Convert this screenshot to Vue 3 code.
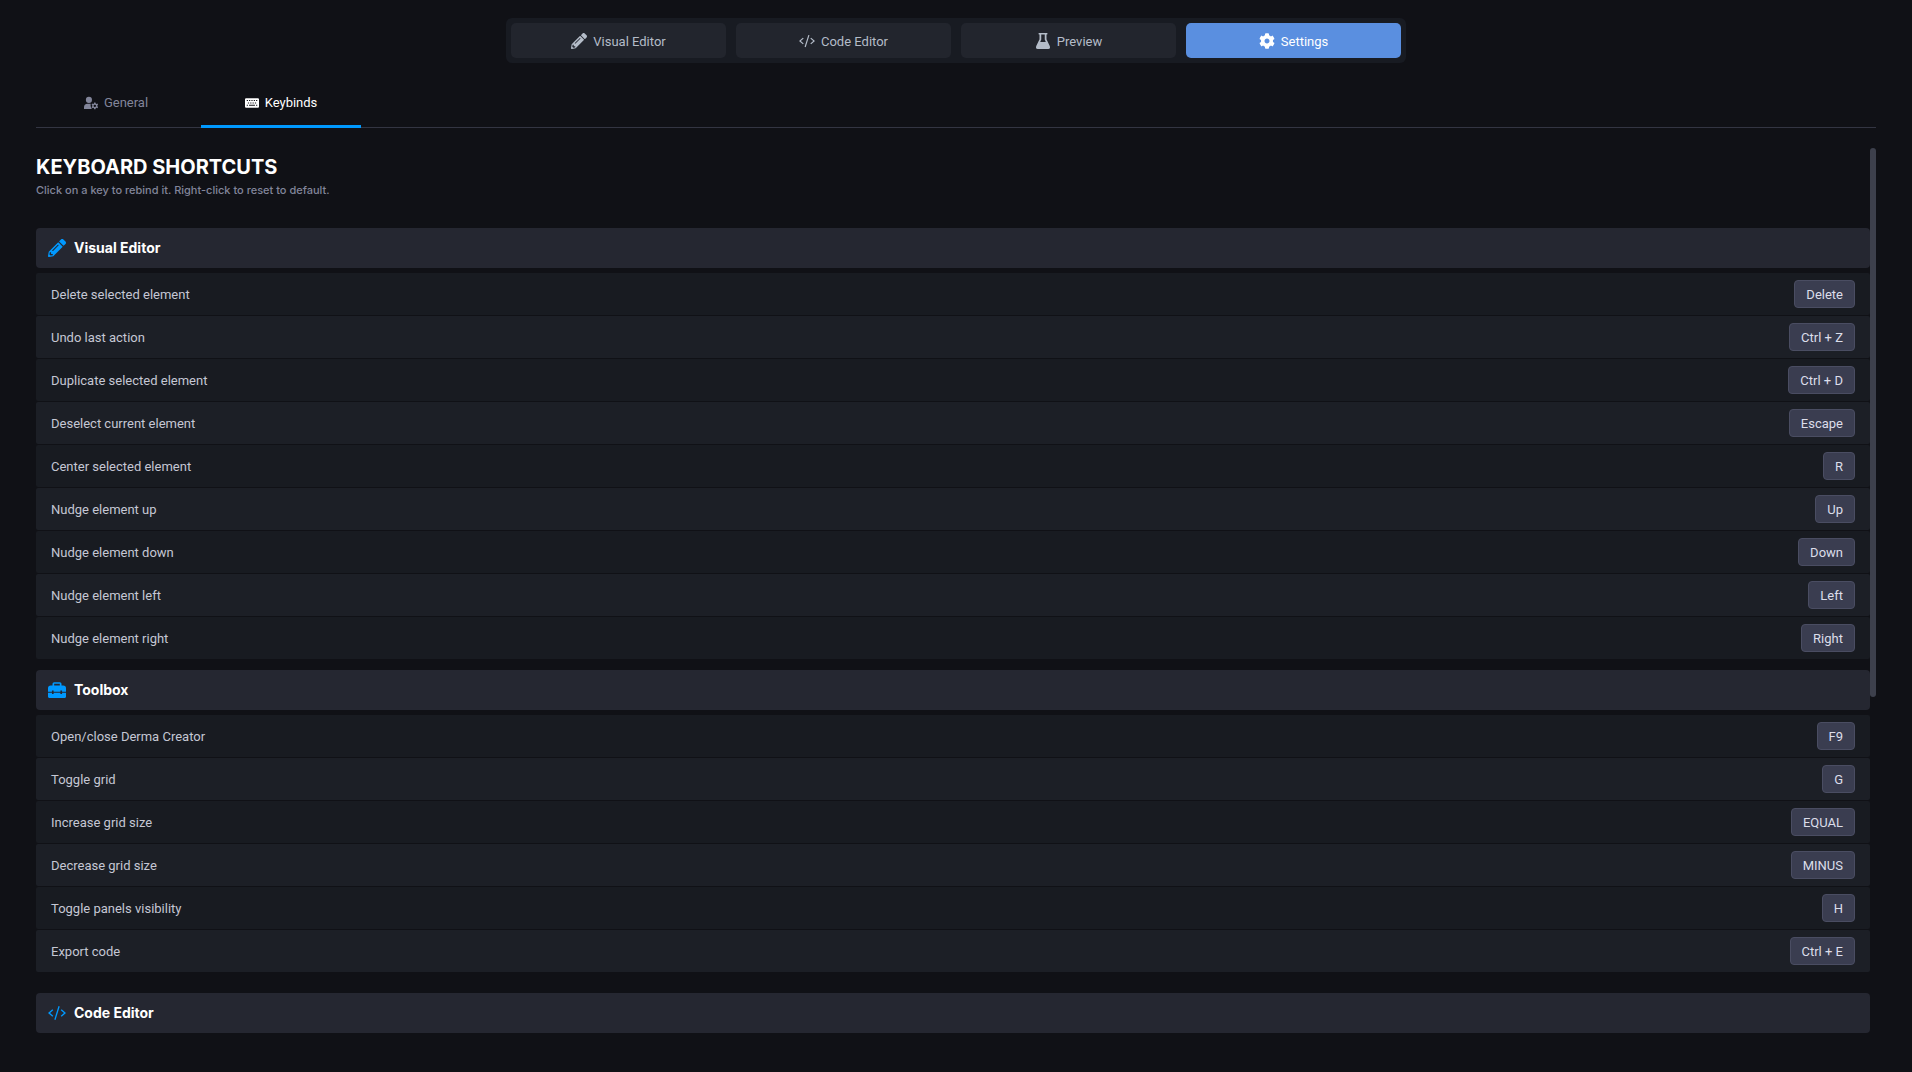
<template>
  <div class="app-shell">
    <nav class="mode-bar">
      <button
        v-for="mode in modes"
        :key="mode.id"
        type="button"
        class="mode-btn"
        :class="{ active: activeMode === mode.id }"
        @click="activeMode = mode.id"
      >
        <svg class="icon icon-md" viewBox="0 0 512 512" aria-hidden="true"><path :d="icons[mode.icon]" /></svg>
        <span>{{ mode.label }}</span>
      </button>
    </nav>

    <div class="tab-bar">
      <button
        v-for="tab in tabs"
        :key="tab.id"
        type="button"
        class="tab-btn"
        :class="{ active: activeTab === tab.id }"
        @click="activeTab = tab.id"
      >
        <svg class="icon icon-sm" viewBox="0 0 512 512" aria-hidden="true"><path fill-rule="evenodd" :d="icons[tab.icon]" /></svg>
        <span>{{ tab.label }}</span>
      </button>
    </div>

    <main class="scroll-area">
      <div class="content">
        <h1 class="title">KEYBOARD SHORTCUTS</h1>
        <p class="subtitle">Click on a key to rebind it. Right-click to reset to default.</p>

        <section v-for="group in groups" :key="group.name" class="group" :class="{ spaced: group.spaced }">
          <h2 class="group-header">
            <svg class="icon icon-lg" viewBox="0 0 512 512" aria-hidden="true"><path :d="icons[group.icon]" /></svg>
            <span>{{ group.name }}</span>
          </h2>
          <ul v-if="group.binds.length" class="bind-list">
            <li v-for="bind in group.binds" :key="bind.label" class="bind-row">
              <span>{{ bind.label }}</span>
              <button type="button" class="key-btn" :aria-label="bind.label + ': ' + bind.key">{{ bind.key }}</button>
            </li>
          </ul>
        </section>
      </div>
      <div class="scroll-track"><div class="scroll-thumb"></div></div>
    </main>
  </div>
</template>

<script setup>
import { ref } from 'vue';

const activeMode = ref('settings');
const activeTab = ref('keybinds');

const modes = [
  { id: 'visual', label: 'Visual Editor', icon: 'pencil' },
  { id: 'code', label: 'Code Editor', icon: 'code' },
  { id: 'preview', label: 'Preview', icon: 'flask' },
  { id: 'settings', label: 'Settings', icon: 'gear' }
];

const tabs = [
  { id: 'general', label: 'General', icon: 'userGear' },
  { id: 'keybinds', label: 'Keybinds', icon: 'keyboard' }
];

const groups = [
  {
    name: 'Visual Editor',
    icon: 'pencil',
    binds: [
      { label: 'Delete selected element', key: 'Delete' },
      { label: 'Undo last action', key: 'Ctrl + Z' },
      { label: 'Duplicate selected element', key: 'Ctrl + D' },
      { label: 'Deselect current element', key: 'Escape' },
      { label: 'Center selected element', key: 'R' },
      { label: 'Nudge element up', key: 'Up' },
      { label: 'Nudge element down', key: 'Down' },
      { label: 'Nudge element left', key: 'Left' },
      { label: 'Nudge element right', key: 'Right' }
    ]
  },
  {
    name: 'Toolbox',
    icon: 'toolbox',
    spaced: true,
    binds: [
      { label: 'Open/close Derma Creator', key: 'F9' },
      { label: 'Toggle grid', key: 'G' },
      { label: 'Increase grid size', key: 'EQUAL' },
      { label: 'Decrease grid size', key: 'MINUS' },
      { label: 'Toggle panels visibility', key: 'H' },
      { label: 'Export code', key: 'Ctrl + E' }
    ]
  },
  { name: 'Code Editor', icon: 'code', binds: [] }
];

const icons = {
  pencil: 'M497.9 142.1l-46.1 46.1c-4.7 4.7-12.3 4.7-17 0l-111-111c-4.7-4.7-4.7-12.3 0-17l46.1-46.1c18.7-18.7 49.1-18.7 67.9 0l60.1 60.1c18.8 18.7 18.8 49.1 0 67.9zM284.2 99.8L21.6 362.4.4 483.9c-2.9 16.4 11.4 30.6 27.8 27.8l121.5-21.3 262.6-262.6c4.7-4.7 4.7-12.3 0-17l-111-111c-4.8-4.7-12.4-4.7-17.1 0zM124.1 339.9c-5.5-5.5-5.5-14.3 0-19.8l154-154c5.5-5.5 14.3-5.5 19.8 0s5.5 14.3 0 19.8l-154 154c-5.5 5.5-14.3 5.5-19.8 0zM88 424h48v36.3l-64.5 11.3-31.1-31.1L51.7 376H88v48z',
  code: 'M298 60l36 10-120 382-36-10zM124 150l26 28-92 78 92 78-26 28L0 256zM388 150l124 106-124 106-26-28 92-78-92-78z',
  flask: 'M128 0h256q16 0 16 24t-16 24h-16v150l104 218q32 96-48 96H88q-80 0-48-96l104-218V48h-16q-16 0-16-24t16-24zM200 48v162l-34 78h180l-34-78V48z',
  gear: 'M487.4 315.7l-42.6-24.6c4.3-23.2 4.3-47 0-70.2l42.6-24.6c4.9-2.8 7.1-8.6 5.5-14-11.1-35.6-30-67.8-54.7-94.6-3.8-4.1-10-5.1-14.8-2.3L380.8 110c-17.9-15.4-38.5-27.3-60.8-35.1V25.8c0-5.6-3.9-10.5-9.4-11.7-36.7-8.2-74.3-7.8-109.2 0-5.5 1.2-9.4 6.1-9.4 11.7V75c-22.2 7.9-42.8 19.8-60.8 35.1L88.7 85.5c-4.9-2.8-11-1.9-14.8 2.3-24.7 26.7-43.6 58.9-54.7 94.6-1.7 5.4.6 11.2 5.5 14L67.3 221c-4.3 23.2-4.3 47 0 70.2l-42.6 24.6c-4.9 2.8-7.1 8.6-5.5 14 11.1 35.6 30 67.8 54.7 94.6 3.8 4.1 10 5.1 14.8 2.3l42.6-24.6c17.9 15.4 38.5 27.3 60.8 35.1v49.2c0 5.6 3.9 10.5 9.4 11.7 36.7 8.2 74.3 7.8 109.2 0 5.5-1.2 9.4-6.1 9.4-11.7v-49.2c22.2-7.9 42.8-19.8 60.8-35.1l42.6 24.6c4.9 2.8 11 1.9 14.8-2.3 24.7-26.7 43.6-58.9 54.7-94.6 1.5-5.5-.7-11.3-5.6-14.1zM256 336c-44.1 0-80-35.9-80-80s35.9-80 80-80 80 35.9 80 80-35.9 80-80 80z',
  userGear: 'M180 30a112 112 0 1 1 0 224a112 112 0 1 1 0-224zM130 284h120q-30 80 36 188H0v-60q0-128 130-128zM372 236h48l8 36 30 16 34-12 24 42-26 24v36l26 24-24 42-34-12-30 16-8 36h-48l-8-36-30-16-34 12-24-42 26-24v-36l-26-24 24-42 34 12 30-16zM396 316a44 44 0 1 0 0 88a44 44 0 1 0 0-88z',
  keyboard: 'M40 80h432q40 0 40 40v272q0 40-40 40H40q-40 0-40-40V120q0-40 40-40zM64 146v36h44v-36zM148 146v36h44v-36zM234 146v36h44v-36zM320 146v36h44v-36zM404 146v36h44v-36zM106 234v36h44v-36zM192 234v36h44v-36zM276 234v36h44v-36zM362 234v36h44v-36zM64 324v36h44v-36zM148 324v36h216v-36zM404 324v36h44v-36z',
  toolbox: 'M176 32h160q48 0 48 48v48h48q80 0 80 80v96H400v-32h-48v32H160v-32h-48v32H0v-96q0-80 80-80h48V80q0-48 48-48zM176 80v48h160V80zM0 336h112v32h48v-32h192v32h48v-32h112v112q0 32-32 32H32q-32 0-32-32z'
};
</script>

<style>
body {
  background: #101116;
}
</style>

<style scoped>
.app-shell {
  display: flex;
  flex-direction: column;
  height: 100vh;
  padding: 18px 36px 30px;
  box-sizing: border-box;
  background: #101116;
  color: #c5c7d4;
  font-family: Roboto, "Liberation Sans", sans-serif;
  font-size: 13px;
  line-height: 20px;
}

button {
  font: inherit;
  color: inherit;
  border: 0;
  cursor: pointer;
}

.icon {
  flex: none;
  fill: currentColor;
}
.icon-sm { width: 14px; height: 14px; }
.icon-md { width: 16px; height: 16px; }
.icon-lg { width: 18px; height: 18px; }

/* top mode switcher */
.mode-bar {
  display: grid;
  grid-template-columns: repeat(4, 1fr);
  gap: 10px;
  width: 100%;
  max-width: 900px;
  margin: 0 auto;
  padding: 5px;
  box-sizing: border-box;
  background: #181b22;
  border-radius: 6px;
}

.mode-btn {
  display: flex;
  align-items: center;
  justify-content: center;
  gap: 6px;
  height: 35px;
  padding: 0;
  border-radius: 5px;
  background: #22252d;
  color: #b4bcc8;
}

.mode-btn span {
  padding-top: 2px;
}

.mode-btn.active {
  background: #5a8fe0;
  color: #fff;
}

/* settings tabs */
.tab-bar {
  display: flex;
  gap: 5px;
  margin-top: 15px;
  box-shadow: inset 0 -1px #333542;
}

.tab-btn {
  display: flex;
  align-items: center;
  justify-content: center;
  gap: 6px;
  width: 160px;
  height: 50px;
  padding: 3px 0 0;
  background: none;
  color: #82859a;
  border-bottom: 3px solid transparent;
}

.tab-btn.active {
  color: #fff;
  border-bottom-color: #0099ff;
}

/* keybind list */
.scroll-area {
  display: flex;
  flex: 1;
  min-height: 0;
  margin-top: 20px;
}

.content {
  flex: 1;
  min-width: 0;
  overflow: hidden;
}

.scroll-track {
  width: 6px;
}

.scroll-thumb {
  height: 61.4%;
  background: #3d404c;
  border-radius: 3px;
}

.title {
  margin: 0;
  padding-top: 6px;
  color: #fff;
  font-family: Inter, "Liberation Sans", sans-serif;
  font-size: 20px;
  font-weight: 700;
  line-height: 26px;
}

.subtitle {
  margin: 0 0 28px;
  color: #82859a;
  font-family: Inter, "Liberation Sans", sans-serif;
  font-size: 11px;
  font-weight: 500;
}

.group {
  margin-bottom: 11px;
}

.group.spaced {
  margin-bottom: 21px;
}

.group-header {
  display: flex;
  align-items: center;
  gap: 8px;
  height: 40px;
  margin: 0;
  padding: 0 12px;
  box-sizing: border-box;
  background: #252731;
  border-radius: 4px;
  color: #fff;
  font-family: Inter, "Liberation Sans", sans-serif;
  font-size: 14px;
  font-weight: 700;
}

.group-header .icon {
  color: #0099ff;
}

.bind-list {
  display: flex;
  flex-direction: column;
  gap: 1px;
  margin: 5px 0 0;
  padding: 0;
  list-style: none;
}

.bind-row {
  display: flex;
  align-items: center;
  justify-content: space-between;
  height: 42px;
  padding: 0 15px;
  background: #181b21;
  border-radius: 2px;
}

.bind-row:nth-child(even) {
  background: #1c1f26;
}

.bind-row > span {
  padding-top: 1px;
}

.key-btn {
  height: 28px;
  padding: 2px 11px 0;
  background: #3a3d50;
  border: 1px solid #4a4d62;
  border-radius: 4px;
  color: #dcdeea;
}
</style>
